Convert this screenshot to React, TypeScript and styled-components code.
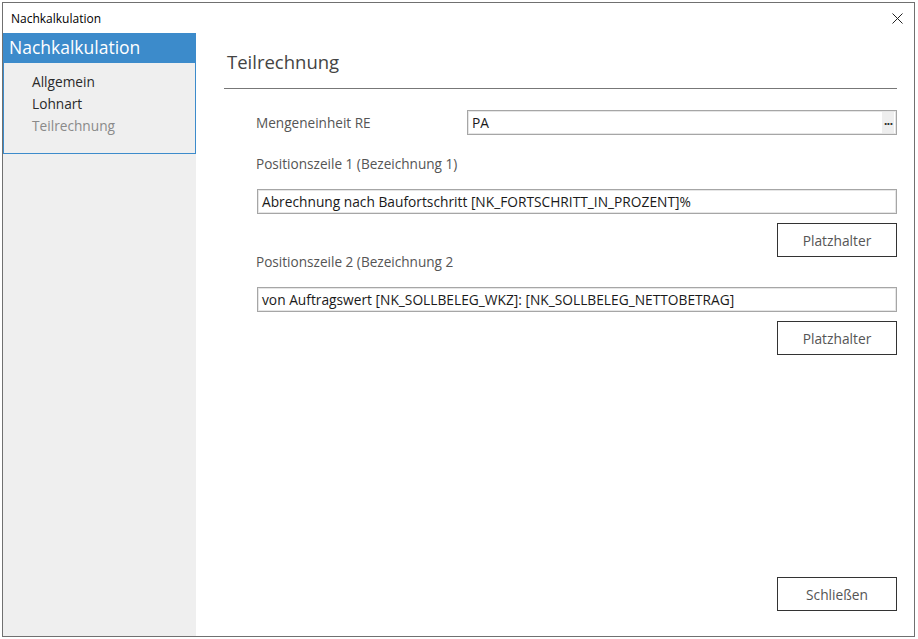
import React from "react";
import styled, { createGlobalStyle } from "styled-components";

const Global = createGlobalStyle`
  html, body { margin: 0; padding: 0; background: #ffffff; }
  body { font-family: "Open Sans", "Noto Sans", sans-serif; }
  * { box-sizing: border-box; }
`;

const Page = styled.div`
  padding: 2px 0 0 2px;
  width: 918px;
  height: 639px;
`;

const Window = styled.div`
  width: 913px;
  height: 635px;
  border: 1px solid #707070;
  display: flex;
  flex-direction: column;
  background: #fff;
`;

const TitleBar = styled.div`
  height: 30px;
  flex: none;
  display: flex;
  align-items: center;
  justify-content: space-between;
  padding: 0 10px 0 8px;
  font-size: 12px;
  color: #000;
`;

const CloseBtn = styled.div`
  width: 14px;
  height: 14px;
  display: flex;
  align-items: center;
  justify-content: center;
`;

const Body = styled.div`
  flex: 1;
  display: flex;
  min-height: 0;
`;

const Sidebar = styled.div`
  width: 193px;
  flex: none;
  background: #efefef;
  display: flex;
  flex-direction: column;
`;

const SideHeader = styled.div`
  height: 30px;
  background: #3c8bcb;
  color: #fff;
  font-size: 17.5px;
  padding: 0 0 3px 6px;
  display: flex;
  align-items: center;
`;

const Nav = styled.div`
  height: 91px;
  border: 1px solid #3c8bcb;
  border-top: none;
  padding: 8px 0 0 28px;
  display: flex;
  flex-direction: column;
`;

const NavItem = styled.div<{ $active?: boolean }>`
  height: 22px;
  line-height: 22px;
  font-size: 13.7px;
  color: ${(p) => (p.$active ? "#8a8a8a" : "#2a2a2a")};
`;

const Content = styled.div`
  flex: 1;
  display: flex;
  flex-direction: column;
  padding: 0 17px 25px 28px;
`;

const Heading = styled.div`
  height: 56px;
  padding: 16px 0 0 3px;
  font-size: 18.5px;
  color: #444;
  border-bottom: 1px solid #777;
`;

const Form = styled.div`
  display: flex;
  flex-direction: column;
  padding-left: 32px;
  flex: 1;
`;

const Row = styled.div`
  display: flex;
  align-items: center;
  margin-top: 20px;
  height: 26px;
`;

const Label = styled.div<{ $width?: number }>`
  font-size: 13.6px;
  color: #555;
  ${(p) => (p.$width ? `width: ${p.$width}px; flex: none;` : "")}
`;

const SectionLabel = styled(Label)<{ $mt: number }>`
  height: 20px;
  line-height: 20px;
  margin-top: ${(p) => p.$mt}px;
`;

const Input = styled.div<{ $mt?: number }>`
  height: 25px;
  border: 1px solid #a6a6a6;
  box-shadow: inset 0 0 0 1px #e6e6e6;
  background: #fff;
  display: flex;
  align-items: center;
  padding-left: 4px;
  font-size: 13.75px;
  color: #1a1a1a;
  margin-top: ${(p) => p.$mt ?? 0}px;
  margin-left: 1px;
`;

const LookupInput = styled(Input)`
  flex: 1;
  margin: 0;
  padding-right: 2px;
  justify-content: space-between;
`;

const Dots = styled.div`
  width: 12px;
  height: 21px;
  background: #eeeeee;
  font-size: 10px;
  line-height: 19px;
  text-align: center;
  color: #333;
  font-family: "DejaVu Sans", sans-serif;
  font-weight: bold;
  letter-spacing: -1px;
`;

const ButtonRow = styled.div<{ $mt?: number }>`
  display: flex;
  justify-content: flex-end;
  margin-top: ${(p) => p.$mt ?? 9}px;
`;

const Button = styled.div`
  width: 120px;
  height: 34px;
  border: 1px solid #333;
  display: flex;
  align-items: center;
  justify-content: center;
  font-size: 13.75px;
  color: #555;
  background: #fff;
`;

const Spacer = styled.div`
  flex: 1;
`;

export default function App() {
  return (
    <Page>
      <Global />
      <Window>
        <TitleBar>
          <span>Nachkalkulation</span>
          <CloseBtn>
            <svg width="11" height="11" viewBox="0 0 11 11">
              <path d="M0.5 0.5 L10.5 10.5 M10.5 0.5 L0.5 10.5" stroke="#222" strokeWidth="1" />
            </svg>
          </CloseBtn>
        </TitleBar>
        <Body>
          <Sidebar>
            <SideHeader>Nachkalkulation</SideHeader>
            <Nav>
              <NavItem>Allgemein</NavItem>
              <NavItem>Lohnart</NavItem>
              <NavItem $active>Teilrechnung</NavItem>
            </Nav>
          </Sidebar>
          <Content>
            <Heading>Teilrechnung</Heading>
            <Form>
              <Row>
                <Label $width={211}>Mengeneinheit RE</Label>
                <LookupInput>
                  <span>PA</span>
                  <Dots>...</Dots>
                </LookupInput>
              </Row>
              <SectionLabel $mt={19}>Positionszeile 1 (Bezeichnung 1)</SectionLabel>
              <Input $mt={15}>Abrechnung nach Baufortschritt [NK_FORTSCHRITT_IN_PROZENT]%</Input>
              <ButtonRow>
                <Button>Platzhalter</Button>
              </ButtonRow>
              <SectionLabel $mt={-5}>Positionszeile 2 (Bezeichnung 2</SectionLabel>
              <Input $mt={15}>von Auftragswert [NK_SOLLBELEG_WKZ]: [NK_SOLLBELEG_NETTOBETRAG]</Input>
              <ButtonRow>
                <Button>Platzhalter</Button>
              </ButtonRow>
              <Spacer />
              <ButtonRow $mt={0}>
                <Button>Schließen</Button>
              </ButtonRow>
            </Form>
          </Content>
        </Body>
      </Window>
    </Page>
  );
}
